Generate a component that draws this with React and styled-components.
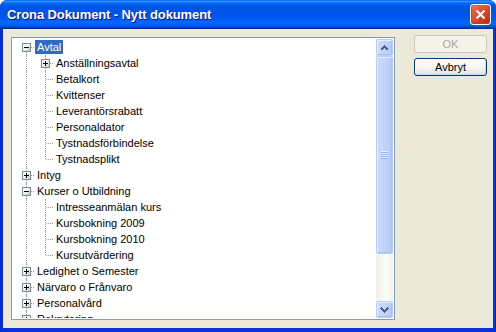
import React from "react";
import styled, { createGlobalStyle, css } from "styled-components";

const GlobalStyle = createGlobalStyle`
  html, body {
    margin: 0;
    padding: 0;
    background: #ffffff;
  }
  body {
    font-family: "Liberation Sans", Arial, sans-serif;
  }
`;

const Window = styled.div`
  width: 496px;
  height: 332px;
  display: flex;
  flex-direction: column;
  box-sizing: border-box;
  background: #0831d9;
  border-radius: 7px 7px 0 0;
  overflow: hidden;
`;

const TitleBar = styled.div`
  height: 29px;
  flex: none;
  display: flex;
  align-items: center;
  padding: 0 5px 0 7px;
  background: linear-gradient(
    to bottom,
    #0058ee 0%,
    #3593ff 4%,
    #288eff 6%,
    #127dff 8%,
    #036ffc 10%,
    #0262ee 14%,
    #0057e5 20%,
    #0054e3 24%,
    #0055eb 56%,
    #005bf5 66%,
    #026afe 76%,
    #0062ef 86%,
    #0052d6 92%,
    #0040ab 94%,
    #003092 100%
  );
`;

const Title = styled.span`
  flex: 1;
  color: #ffffff;
  font-weight: bold;
  font-size: 13px;
  letter-spacing: -0.1px;
  text-shadow: 1px 1px #0f1089;
  white-space: nowrap;
`;

const CloseButton = styled.div`
  width: 21px;
  height: 21px;
  box-sizing: border-box;
  border: 1px solid #ffffff;
  border-radius: 3px;
  display: flex;
  align-items: center;
  justify-content: center;
  background: radial-gradient(circle at 85% 85%, #c0301a 0%, #d84a2c 50%, #ec8466 100%);
  box-shadow: inset 0 -1px 2px 1px #c8381c;
`;

const Frame = styled.div`
  flex: 1;
  min-height: 0;
  display: flex;
  padding: 0 3px 4px 3px;
  background: linear-gradient(to right, #0019cf 0, #0831d9 1px, #0831d9 calc(100% - 1px), #001ea0 100%);
`;

const Client = styled.div`
  flex: 1;
  display: flex;
  align-items: flex-start;
  gap: 19px;
  padding: 6px 6px 8px 8px;
  background: #ece9d8;
`;

const TreeBox = styled.div`
  width: 384px;
  height: 283px;
  margin-top: 2px;
  box-sizing: border-box;
  border: 1px solid #7f9db9;
  padding: 1px;
  background: #ffffff;
  display: flex;
  overflow: hidden;
`;

const TreeList = styled.div`
  flex: 1;
  padding-left: 3px;
  overflow: hidden;
`;

const Row = styled.div`
  height: 16px;
  display: flex;
  align-items: center;
`;

const Cell = styled.span`
  position: relative;
  width: 19px;
  height: 16px;
  flex: none;
  ${(p) =>
    p.$v &&
    css`
      &::before {
        content: "";
        position: absolute;
        left: 10px;
        top: ${p.$v === "bottom" ? "8px" : "0"};
        bottom: ${p.$v === "top" ? "8px" : "0"};
        border-left: 1px dotted #a0a0a0;
      }
    `}
  ${(p) =>
    p.$h &&
    css`
      &::after {
        content: "";
        position: absolute;
        left: 11px;
        right: 1px;
        top: 8px;
        border-top: 1px dotted #a0a0a0;
      }
    `}
`;

const ExpanderBox = styled.svg`
  position: absolute;
  left: 6px;
  top: 4px;
  z-index: 1;
`;

const Label = styled.span`
  height: 14px;
  line-height: 14px;
  padding: 0 2px;
  font-size: 11px;
  color: #000000;
  white-space: nowrap;
  ${(p) =>
    p.$selected &&
    css`
      background: #316ac5;
      color: #ffffff;
    `}
`;

const ScrollBar = styled.div`
  width: 17px;
  flex: none;
  display: flex;
  flex-direction: column;
  background: linear-gradient(to right, #f0efe8 0%, #fdfdfa 60%, #f3f1ec 100%);
`;

const ScrollPart = styled.div`
  height: ${(p) => p.$h}px;
  flex: none;
  box-sizing: border-box;
  border: 1px solid #b7cbf5;
  border-radius: 2px;
  display: flex;
  align-items: center;
  justify-content: center;
  background: linear-gradient(to right, #cbd9fd 0%, #c2d4fc 50%, #b5cafa 100%);
  box-shadow: inset 1px 1px #e8efff, inset -1px -1px #a9c0f4;
`;

const Track = styled.div`
  flex: 1;
`;

const Buttons = styled.div`
  width: 73px;
  display: flex;
  flex-direction: column;
  gap: 5px;
`;

const Button = styled.div`
  height: 18px;
  box-sizing: border-box;
  border-radius: 3px;
  display: flex;
  align-items: center;
  justify-content: center;
  font-size: 11px;
  ${(p) =>
    p.$disabled
      ? css`
          border: 1px solid #c9c7ba;
          background: #f5f4ea;
          color: #aca899;
        `
      : css`
          border: 1px solid #003c74;
          background: linear-gradient(to bottom, #ffffff 0%, #f4f4f0 60%, #e3e2da 100%);
          color: #000000;
          box-shadow: inset 1px 1px #ffffff, inset -1px -1px #c8d6ec;
        `}
`;

const rows = [
  { label: "Avtal", level: 0, exp: "minus", sel: true, first: true },
  { label: "Anställningsavtal", level: 1, exp: "plus" },
  { label: "Betalkort", level: 1 },
  { label: "Kvittenser", level: 1 },
  { label: "Leverantörsrabatt", level: 1 },
  { label: "Personaldator", level: 1 },
  { label: "Tystnadsförbindelse", level: 1 },
  { label: "Tystnadsplikt", level: 1, last: true },
  { label: "Intyg", level: 0, exp: "plus" },
  { label: "Kurser o Utbildning", level: 0, exp: "minus" },
  { label: "Intresseanmälan kurs", level: 1 },
  { label: "Kursbokning 2009", level: 1 },
  { label: "Kursbokning 2010", level: 1 },
  { label: "Kursutvärdering", level: 1, last: true },
  { label: "Ledighet o Semester", level: 0, exp: "plus" },
  { label: "Närvaro o Frånvaro", level: 0, exp: "plus" },
  { label: "Personalvård", level: 0, exp: "plus" },
  { label: "Rekrytering", level: 0, exp: "plus" },
];

const Expander = ({ type }) => (
  <ExpanderBox width="9" height="9" viewBox="0 0 9 9" shapeRendering="crispEdges">
    <defs>
      <linearGradient id="expFill" x1="0" y1="0" x2="1" y2="1">
        <stop offset="0" stopColor="#ffffff" />
        <stop offset="0.5" stopColor="#f2f1ec" />
        <stop offset="1" stopColor="#c6c2b3" />
      </linearGradient>
    </defs>
    <rect x="0.5" y="0.5" width="8" height="8" fill="url(#expFill)" stroke="#7b8896" />
    <line x1="2" y1="4.5" x2="7" y2="4.5" stroke="#000000" />
    {type === "plus" && <line x1="4.5" y1="2" x2="4.5" y2="7" stroke="#000000" />}
  </ExpanderBox>
);

const TreeRow = ({ row }) => {
  const v = row.first ? "bottom" : row.last ? "top" : "full";
  return (
    <Row>
      {Array.from({ length: row.level }, (_, i) => (
        <Cell key={i} $v="full" />
      ))}
      <Cell $v={v} $h>
        {row.exp && <Expander type={row.exp} />}
      </Cell>
      <Label $selected={row.sel}>{row.label}</Label>
    </Row>
  );
};

const Arrow = ({ dir }) => (
  <svg width="9" height="6" viewBox="0 0 9 6" shapeRendering="crispEdges">
    <path
      d={dir === "up" ? "M1 5 L4.5 1.5 L8 5" : "M1 1 L4.5 4.5 L8 1"}
      fill="none"
      stroke="#4d6185"
      strokeWidth="2"
    />
  </svg>
);

const Grip = () => (
  <svg width="7" height="8" viewBox="0 0 7 8" shapeRendering="crispEdges">
    {[0, 2, 4, 6].map((y) => (
      <g key={y}>
        <rect x="0" y={y} width="7" height="1" fill="#eef4fe" />
        <rect x="0" y={y + 1} width="7" height="1" fill="#8cb0f8" />
      </g>
    ))}
  </svg>
);

const App = () => (
  <>
    <GlobalStyle />
    <Window>
      <TitleBar>
        <Title>Crona Dokument - Nytt dokument</Title>
        <CloseButton>
          <svg width="11" height="11" viewBox="0 0 11 11">
            <path d="M1.5 1.5 L9.5 9.5 M9.5 1.5 L1.5 9.5" stroke="#ffffff" strokeWidth="2.2" />
          </svg>
        </CloseButton>
      </TitleBar>
      <Frame>
        <Client>
          <TreeBox>
            <TreeList>
              {rows.map((row) => (
                <TreeRow key={row.label} row={row} />
              ))}
            </TreeList>
            <ScrollBar>
              <ScrollPart $h={17}>
                <Arrow dir="up" />
              </ScrollPart>
              <ScrollPart $h={198}>
                <Grip />
              </ScrollPart>
              <Track />
              <ScrollPart $h={17}>
                <Arrow dir="down" />
              </ScrollPart>
            </ScrollBar>
          </TreeBox>
          <Buttons>
            <Button $disabled>OK</Button>
            <Button>Avbryt</Button>
          </Buttons>
        </Client>
      </Frame>
    </Window>
  </>
);

export default App;
